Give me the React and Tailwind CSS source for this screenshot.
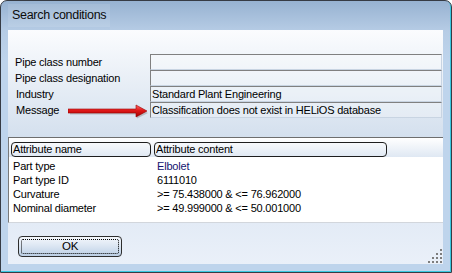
import React from "react";

function Arrow() {
  return (
    <svg width="82" height="16" viewBox="0 0 82 16" className="block">
      <defs>
        <linearGradient id="ag" x1="0" y1="0" x2="0" y2="1">
          <stop offset="0" stopColor="#ff6a6a" />
          <stop offset="0.45" stopColor="#e01818" />
          <stop offset="1" stopColor="#a00000" />
        </linearGradient>
      </defs>
      <path d="M2 7.5 H69 V3.5 L80 9 L69 14.5 V10.5 H2 Z" fill="#8a8a8a" opacity="0.45" />
      <path d="M0 5 H68 V1 L79 7 L68 13 V9 H0 Z" fill="url(#ag)" stroke="#9a0000" strokeWidth="0.6" />
    </svg>
  );
}

function Grip() {
  const dots = [
    [10, 0],
    [6, 4], [10, 4],
    [2, 8], [6, 8], [10, 8],
    [-2, 12], [2, 12], [6, 12], [10, 12],
  ];
  return (
    <svg width="14" height="14" viewBox="-2 0 14 14" className="block">
      {dots.map(([x, y], i) => (
        <rect key={i} x={x} y={y} width="2" height="2" fill="#7d7d7d" />
      ))}
    </svg>
  );
}

function Field({ text }) {
  return (
    <div className="h-full flex-1 mr-px border-t border-l border-t-[#808080] border-l-[#808080] border-r border-b border-r-[#c8d4e2] border-b-[#c8d4e2] bg-white/25 flex items-center pl-px leading-none whitespace-nowrap">
      {text}
    </div>
  );
}

export default function App() {
  const rows = [
    ["Part type", "Elbolet", true],
    ["Part type ID", "6111010", false],
    ["Curvature", ">= 75.438000 & <= 76.962000", false],
    ["Nominal diameter", ">= 49.999000 & <= 50.001000", false],
  ];
  return (
    <div className="w-[452px] h-[273px] font-['Liberation_Sans',Arial,sans-serif] text-[11px] tracking-[-0.2px] text-black">
      <div className="w-full h-full flex flex-col border border-[#363b44] rounded-t-[7px] overflow-hidden shadow-[inset_-1px_-1px_0_#38c8e0] bg-[linear-gradient(to_bottom,#97b2d1_0px,#b6cce5_30px,#bed4ec_60px,#bed4ec_100%)]">
        <div className="h-[29px] shrink-0 flex items-center pl-[7px]">
          <div className="px-[4px] py-[2px] bg-white/10 text-[12.5px] tracking-[-0.3px] text-[#0c0c0c]">
            Search conditions
          </div>
        </div>
        <div className="mx-[7px] w-[435px] h-[234px] flex flex-col">
          <div className="h-[107px] shrink-0 bg-[linear-gradient(to_bottom,#fbfcfe,#edf2f8_35%,#d4e0ee)] pt-[24px] flex flex-col">
            {[
              ["Pipe class number", ""],
              ["Pipe class designation", ""],
              ["Industry", "Standard Plant Engineering"],
              ["Message", "Classification does not exist in HELiOS database"],
            ].map(([label, val], i) => (
              <div key={i} className="h-[16px] flex items-center">
                <div className="w-[142px] shrink-0 pl-[7px] flex items-center leading-none">
                  <span className={i >= 2 ? "pl-px" : ""}>{label}</span>
                  {i === 3 && (
                    <span className="ml-[9px] mt-[3px]">
                      <Arrow />
                    </span>
                  )}
                </div>
                <Field text={val} />
              </div>
            ))}
          </div>
          <div className="h-[86px] shrink-0 bg-white border-t border-t-[#6e6e6e] border-l border-l-[#7a7a7a] border-b border-b-[#d2d6dc] flex flex-col">
            <div className="h-[19px] shrink-0 bg-[linear-gradient(to_bottom,#ffffff,#dfe8f3)] flex items-center pl-[2px] gap-[3px] pt-[3px]">
              <div className="w-[140px] h-[15px] border border-[#1e1e1e] rounded-[4px] flex items-center pl-[1px] leading-none">
                Attribute name
              </div>
              <div className="w-[233px] h-[15px] border border-[#1e1e1e] rounded-[4px] flex items-center pl-[1px] leading-none">
                Attribute content
              </div>
            </div>
            <div className="pt-[2px] flex flex-col">
              {rows.map(([a, b, blue], i) => (
                <div key={i} className="h-[14px] flex items-center leading-none">
                  <div className="w-[148px] pl-[4px] shrink-0">{a}</div>
                  <div className={blue ? "text-[#141470]" : ""}>{b}</div>
                </div>
              ))}
            </div>
          </div>
          <div className="flex-1 bg-[linear-gradient(to_bottom,#e3ebf6,#eaf0f9)] flex justify-between items-end pl-[10px] pt-[13px]">
            <div className="self-start w-[104px] h-[21px] border border-[#2e2e2e] rounded-[4px] bg-[linear-gradient(to_bottom,#f4f7fc,#dde7f3_45%,#bccfe6)] p-[2px]">
              <div className="w-full h-full border border-dotted border-black rounded-[2px] flex items-center justify-center leading-none text-[11.5px]">
                OK
              </div>
            </div>
            <div className="mb-[1px] mr-px">
              <Grip />
            </div>
          </div>
        </div>
      </div>
    </div>
  );
}
